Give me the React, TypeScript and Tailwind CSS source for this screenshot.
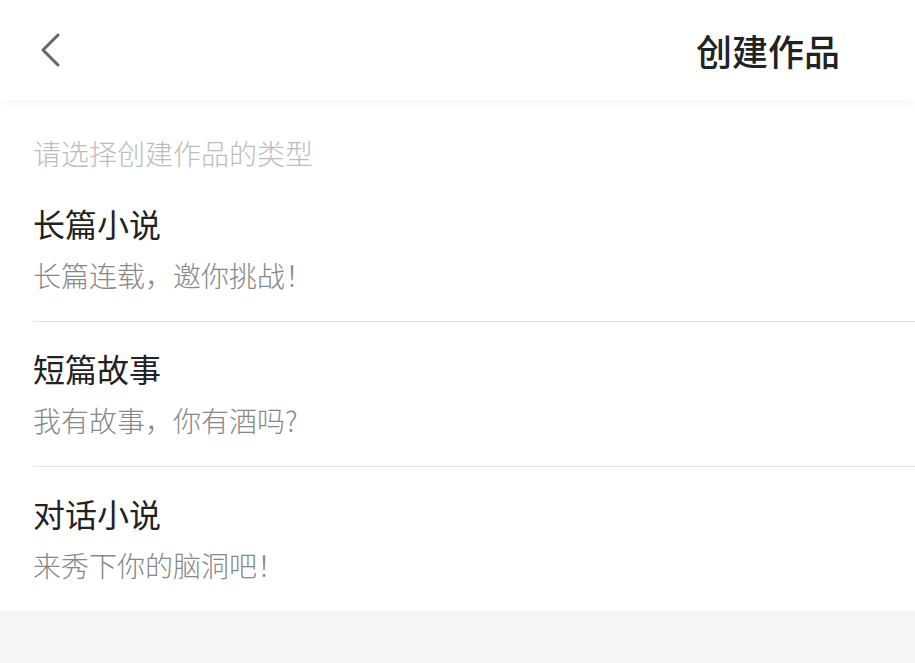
import React from 'react';

const types = [
    {id: 1, title: '长篇小说', desc: '长篇连载，邀你挑战！'},
    {id: 2, title: '短篇故事', desc: '我有故事，你有酒吗?'},
    {id: 3, title: '对话小说', desc: '来秀下你的脑洞吧！'},
];

const font = {fontFamily: '"Noto Sans CJK SC", "Noto Sans", sans-serif'};

const App = () => {
    return (
        <div className="min-h-[663px] w-full bg-[#f5f5f5]" style={font}>
            <header className="relative z-10 flex h-[100px] items-center justify-between bg-white pl-[38px] pr-[75px] shadow-[0_4px_10px_rgba(0,0,0,0.04)]">
                <button className="flex h-[40px] w-[28px] items-center">
                    <svg width="24" height="34" viewBox="0 0 24 34" fill="none">
                        <path d="M20 2 L5 17 L20 32" stroke="#666" strokeWidth="3" strokeLinecap="round" strokeLinejoin="round" />
                    </svg>
                </button>
                <h1 className="text-[36px] font-medium leading-[44px] text-[#222]">创建作品</h1>
            </header>

            <div className="bg-white pl-[33px]">
                <p className="pt-[33px] pb-[4px] text-[28px] font-light leading-[40px] text-[#bdbdbd]">请选择创建作品的类型</p>
                <ul>
                    {types.map((t, i) => (
                        <li
                            key={t.id}
                            className={i < types.length - 1 ? 'border-b border-[#e3e3e3] pt-[24px] pb-[26px]' : 'pt-[24px] pb-[26px]'}
                        >
                            <div className="text-[32px] leading-[44px] text-[#222]">{t.title}</div>
                            <div className="mt-[10px] text-[28px] font-light leading-[40px] text-[#888]">{t.desc}</div>
                        </li>
                    ))}
                </ul>
            </div>
        </div>
    );
};

export default App;
